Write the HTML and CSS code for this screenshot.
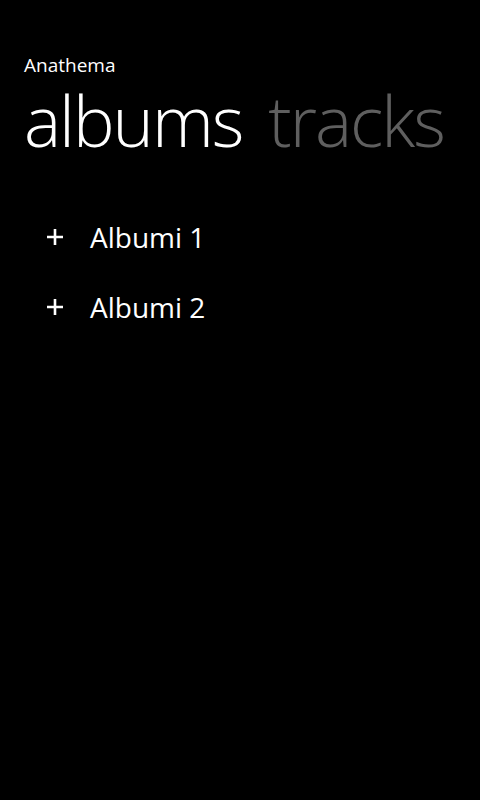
FILE: index.html
```html
<!DOCTYPE html>
<html>
<head>
<meta charset="utf-8">
<link rel="stylesheet" href="styles.css">
</head>
<body>
<div class="page">
  <div class="app-title">Anathema</div>
  <div class="pivot">
    <span class="pivot-item active">albums</span>
    <span class="pivot-item">tracks</span>
  </div>
  <ul class="list">
    <li class="row">
      <svg class="plus" width="18" height="18" viewBox="0 0 18 18"><path d="M9 1V17M1 9H17" stroke="#fff" stroke-width="2.6"/></svg>
      <span class="label">Albumi 1</span>
    </li>
    <li class="row">
      <svg class="plus" width="18" height="18" viewBox="0 0 18 18"><path d="M9 1V17M1 9H17" stroke="#fff" stroke-width="2.6"/></svg>
      <span class="label">Albumi 2</span>
    </li>
  </ul>
</div>
</body>
</html>
```
FILE: styles.css
```css
html, body {
  margin: 0;
  padding: 0;
  background: #000;
  height: 100%;
}
.page {
  width: 480px;
  height: 800px;
  background: #000;
  color: #fff;
  font-family: "Open Sans", "DejaVu Sans", sans-serif;
  padding: 53px 0 0 24px;
  box-sizing: border-box;
}
.app-title {
  font-size: 19px;
  line-height: 24px;
}
.pivot {
  display: flex;
  gap: 26px;
  margin-top: 3px;
  font-weight: 300;
  font-size: 70px;
  line-height: 80px;
  letter-spacing: -2px;
  white-space: nowrap;
}
.pivot-item { color: #5f5f5f; }
.pivot-item.active { color: #fff; }
.list {
  list-style: none;
  margin: 42px 0 0 0;
  padding: 0 0 0 22px;
}
.row {
  display: flex;
  align-items: center;
  gap: 26px;
  height: 70px;
}
.label {
  font-size: 28px;
}
```
